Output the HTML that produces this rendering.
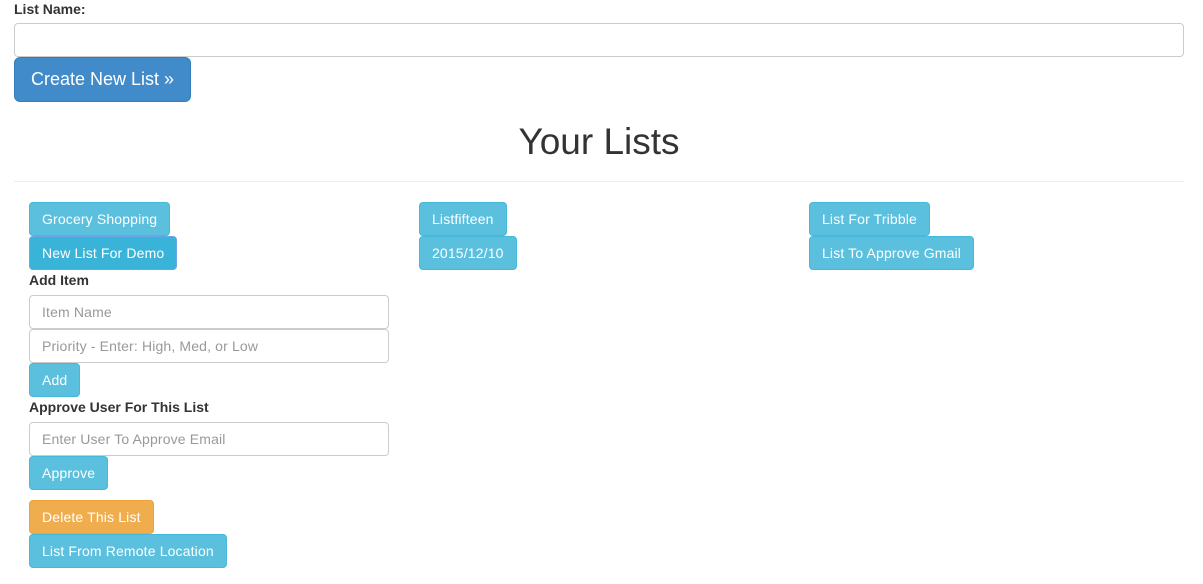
<!DOCTYPE html>
<html><head><style>
*{box-sizing:border-box}
body{margin:0;width:1203px;height:584px;overflow:hidden;background:#fff;font-family:"Liberation Sans",sans-serif;font-size:14px;color:#333;position:relative}
.a{position:absolute}
.lbl{font-weight:bold;font-size:14px;color:#333;white-space:nowrap}
.inp{border:1px solid #ccc;border-radius:4px;background:#fff;color:#999;padding:0 12px;line-height:32px;height:34px;white-space:nowrap;letter-spacing:0.15px}
.btn{border:1px solid #46b8da;background:#5bc0de;color:#fff;border-radius:4px;height:34px;line-height:32px;padding:0 12px;white-space:nowrap;letter-spacing:0.15px}
</style></head><body>
<div class="a lbl" style="left:14px;top:1px;line-height:16px">List Name:</div>
<div class="a inp" style="left:14px;top:23px;width:1170px;height:34px"></div>
<div class="a" style="left:14px;top:57px;width:177px;height:45px;background:#428bca;border:1px solid #357ebd;border-radius:6px;color:#fff;font-size:18px;line-height:43px;padding-left:16px;white-space:nowrap">Create New List »</div>
<div class="a" style="left:0;width:1198px;top:119px;text-align:center;font-size:37px;line-height:46px;color:#333">Your Lists</div>
<div class="a" style="left:14px;top:181px;width:1170px;height:1px;background:#eee"></div>

<div class="a btn" style="left:29px;top:202px">Grocery Shopping</div>
<div class="a btn" style="left:29px;top:236px;background:#39b3d7;border-color:#6aa6e8">New List For Demo</div>
<div class="a lbl" style="left:29px;top:272px;line-height:16px">Add Item</div>
<div class="a inp" style="left:29px;top:295px;width:360px">Item Name</div>
<div class="a inp" style="left:29px;top:329px;width:360px">Priority - Enter: High, Med, or Low</div>
<div class="a btn" style="left:29px;top:363px">Add</div>
<div class="a lbl" style="left:29px;top:399px;line-height:16px">Approve User For This List</div>
<div class="a inp" style="left:29px;top:422px;width:360px">Enter User To Approve Email</div>
<div class="a btn" style="left:29px;top:456px">Approve</div>
<div class="a btn" style="left:29px;top:500px;background:#f0ad4e;border-color:#eea236">Delete This List</div>
<div class="a btn" style="left:29px;top:534px">List From Remote Location</div>

<div class="a btn" style="left:419px;top:202px">Listfifteen</div>
<div class="a btn" style="left:419px;top:236px">2015/12/10</div>
<div class="a btn" style="left:809px;top:202px">List For Tribble</div>
<div class="a btn" style="left:809px;top:236px">List To Approve Gmail</div>
</body></html>
